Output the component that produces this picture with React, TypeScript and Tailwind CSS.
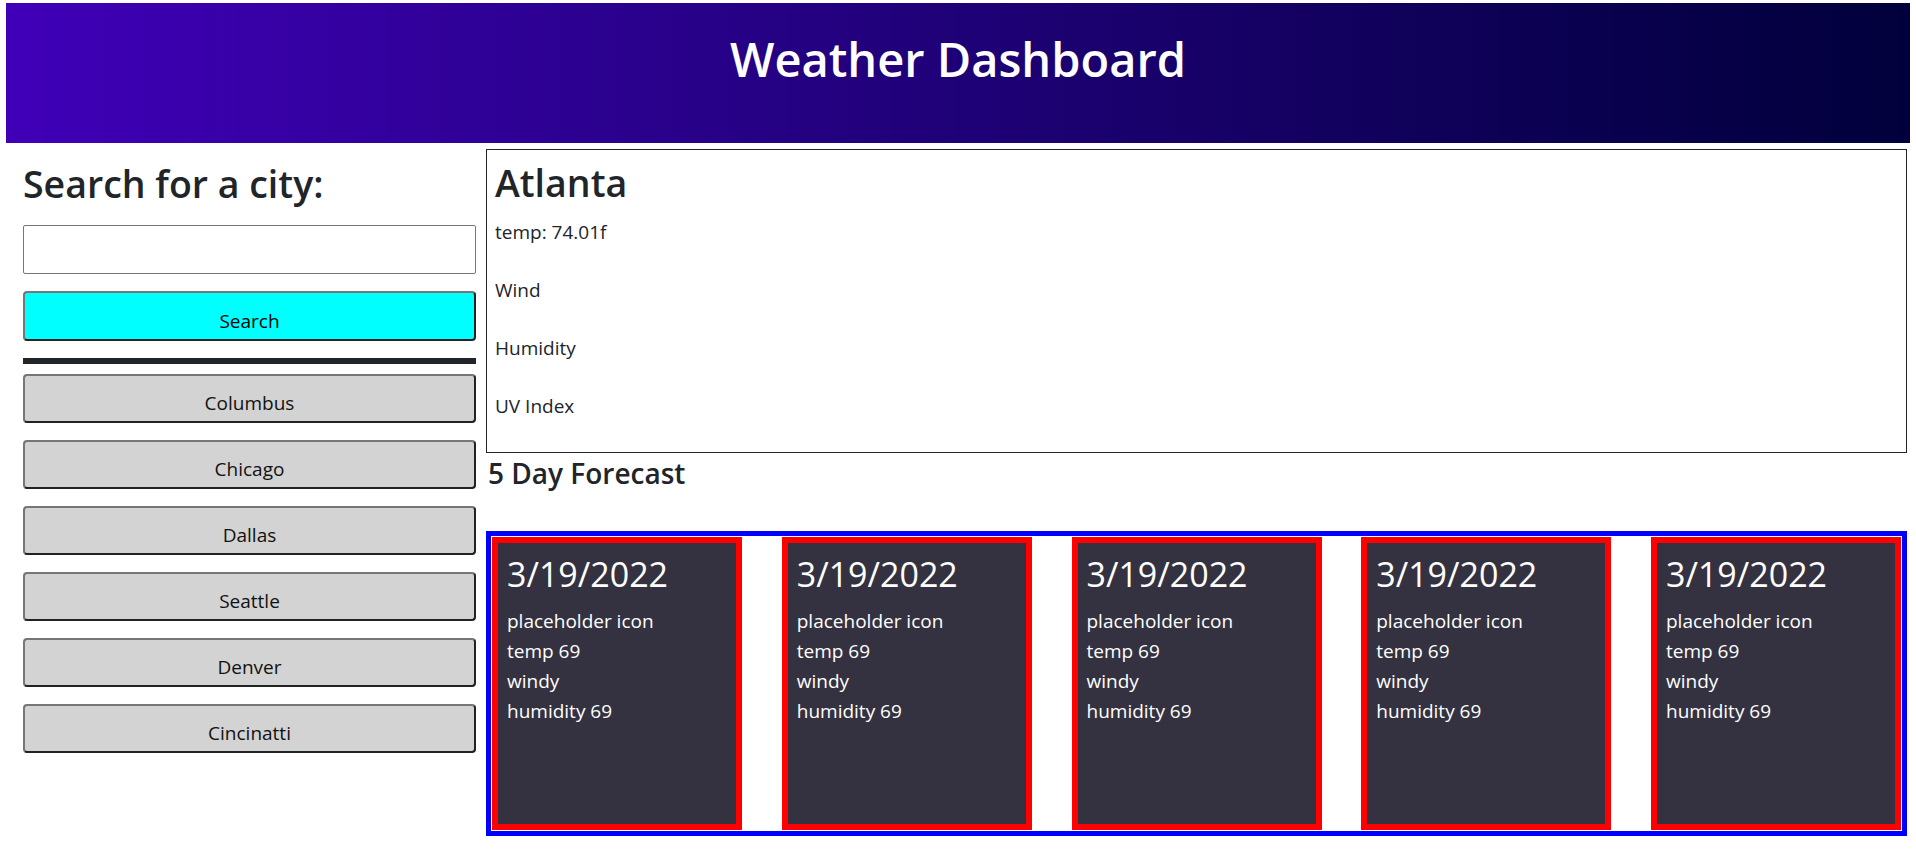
import React from 'react';

const cities = ['Columbus', 'Chicago', 'Dallas', 'Seattle', 'Denver', 'Cincinatti'];
const days = [1, 2, 3, 4, 5];

function CityButton({ name }: { name: string }) {
  return (
    <button className="flex h-[49px] w-full items-center justify-center rounded-[4px] border-2 border-[#767676] border-b-[#222] border-r-[#222] bg-[#d3d3d3] pt-[9px] text-[19px] leading-[30px] text-[#111]">
      {name}
    </button>
  );
}

function ForecastCard() {
  return (
    <div className="h-full w-[250px] border-[6px] border-[#ff0000] bg-[#343241] px-[9px] pt-[10px] text-white">
      <h4 className="text-[34px] font-medium leading-[43px]">3/19/2022</h4>
      <div className="mt-[10px] text-[19px] leading-[30px]">
        <p>placeholder icon</p>
        <p>temp 69</p>
        <p>windy</p>
        <p>humidity 69</p>
      </div>
    </div>
  );
}

export default function App() {
  return (
    <div className="min-h-screen bg-white font-['Open_Sans',sans-serif] text-[#212529]">
      {/* Header */}
      <header className="mx-[6px] mt-[3px] flex h-[140px] justify-center bg-linear-to-r from-[#4000b8] to-[#02003c] pt-[26px]">
        <h1 className="text-[47px] font-semibold leading-[60px] text-white">Weather Dashboard</h1>
      </header>

      <div className="mt-[6px] flex gap-[10px] pl-[23px] pr-[9px]">
        {/* Search column */}
        <aside className="w-[453px] shrink-0">
          <h2 className="mt-[12px] text-[37.5px] font-semibold leading-[45px]">Search for a city:</h2>
          <input className="mt-[19px] block h-[49px] w-full rounded-[2px] border border-[#767676] bg-white" />
          <button className="mt-[17px] flex h-[50px] w-full items-center justify-center rounded-[4px] border-2 border-[#767676] border-b-[#222] border-r-[#222] bg-[#00ffff] pt-[10px] text-[19px] leading-[30px] text-black">
            Search
          </button>
          <hr className="mt-[17px] h-[6px] border-0 bg-[#212529]" />
          <div className="mt-[10px] flex flex-col gap-[17px]">
            {cities.map((c) => (
              <CityButton key={c} name={c} />
            ))}
          </div>
        </aside>

        {/* Weather column */}
        <main className="min-w-0 flex-1">
          <section className="h-[304px] border border-[#212529] px-[8px] pt-[10px]">
            <h2 className="text-[37.5px] font-semibold leading-[46px]">Atlanta</h2>
            <div className="mt-[11px] flex flex-col gap-[28px] text-[19px] leading-[30px]">
              <p>temp: 74.01f</p>
              <p>Wind</p>
              <p>Humidity</p>
              <p>UV Index</p>
            </div>
          </section>
          <h3 className="mt-[3px] pl-[2px] text-[28px] font-semibold leading-[34px]">5 Day Forecast</h3>
          <div className="mt-[41px] flex h-[305px] justify-between border-[5px] border-[#0000ff] p-px">
            {days.map((d) => (
              <ForecastCard key={d} />
            ))}
          </div>
        </main>
      </div>
    </div>
  );
}
